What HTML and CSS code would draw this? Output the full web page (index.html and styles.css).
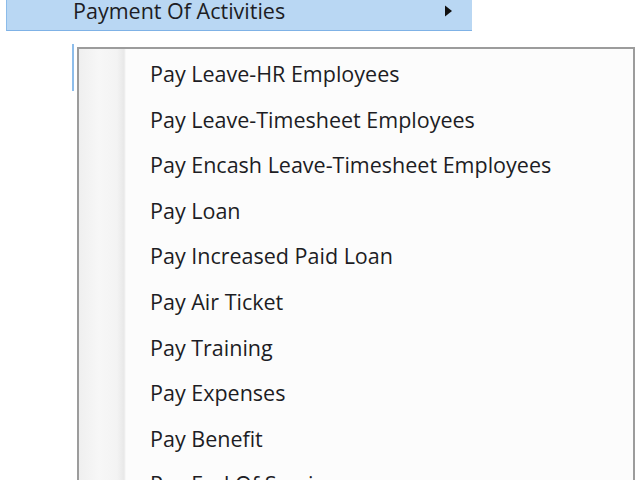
FILE: index.html
```html
<!DOCTYPE html>
<html lang="en">
<head>
    <meta charset="UTF-8">
    <title>Payment Of Activities</title>
    <link rel="stylesheet" href="styles.css">
</head>
<body>
    <!-- Highlighted parent item -->
    <div class="menu-item active">
        <span class="menu-label">Payment Of Activities</span>
        <svg class="submenu-arrow" width="9" height="12" viewBox="0 0 9 12">
            <path d="M1 0.5 L8 6 L1 11.5 Z" fill="#111"/>
        </svg>
    </div>

    <div class="submenu-row">
        <div class="parent-edge"></div>
        <ul class="submenu">
            <li>Pay Leave-HR Employees</li>
            <li>Pay Leave-Timesheet Employees</li>
            <li>Pay Encash Leave-Timesheet Employees</li>
            <li>Pay Loan</li>
            <li>Pay Increased Paid Loan</li>
            <li>Pay Air Ticket</li>
            <li>Pay Training</li>
            <li>Pay Expenses</li>
            <li>Pay Benefit</li>
            <li>Pay End Of Service</li>
        </ul>
    </div>
</body>
</html>
```

FILE: styles.css
```css
html, body {
    height: 100%;
    overflow: hidden;
}

body {
    margin: 0;
    background: #ffffff;
    font-family: "Open Sans", "Noto Sans", sans-serif;
    color: #1d1d24;
}

.menu-item.active {
    display: flex;
    align-items: center;
    justify-content: space-between;
    box-sizing: border-box;
    width: 466px;
    height: 31px;
    margin-left: 6px;
    padding: 0 19px 2px 66px;
    background: #b9d7f3;
    border-left: 1px solid #8cbcea;
    border-bottom: 1px solid #7fb2e6;
}

.menu-label {
    font-size: 21.5px;
    line-height: 24px;
    margin-top: -6px;
}

.submenu-arrow {
    margin-top: -6px;
}

.submenu-row {
    display: flex;
    align-items: flex-start;
    margin-top: 13px;
    padding-left: 72px;
}

.parent-edge {
    width: 2px;
    height: 47px;
    background: #8dbdeb;
}

.submenu {
    list-style: none;
    width: 558px;
    box-sizing: border-box;
    margin: 3px 0 0 3px;
    padding: 2px 0 0 0;
    border: 2px solid #9c9c9c;
    background: linear-gradient(to right, #efefef 0, #f7f7f7 20px, #f3f3f3 38px, #e8e8e8 45px, #fcfcfc 47px, #fcfcfc 100%);
}

.submenu li {
    height: 45.6px;
    line-height: 45.6px;
    padding-left: 71px;
    font-size: 21.5px;
    white-space: nowrap;
}
```
